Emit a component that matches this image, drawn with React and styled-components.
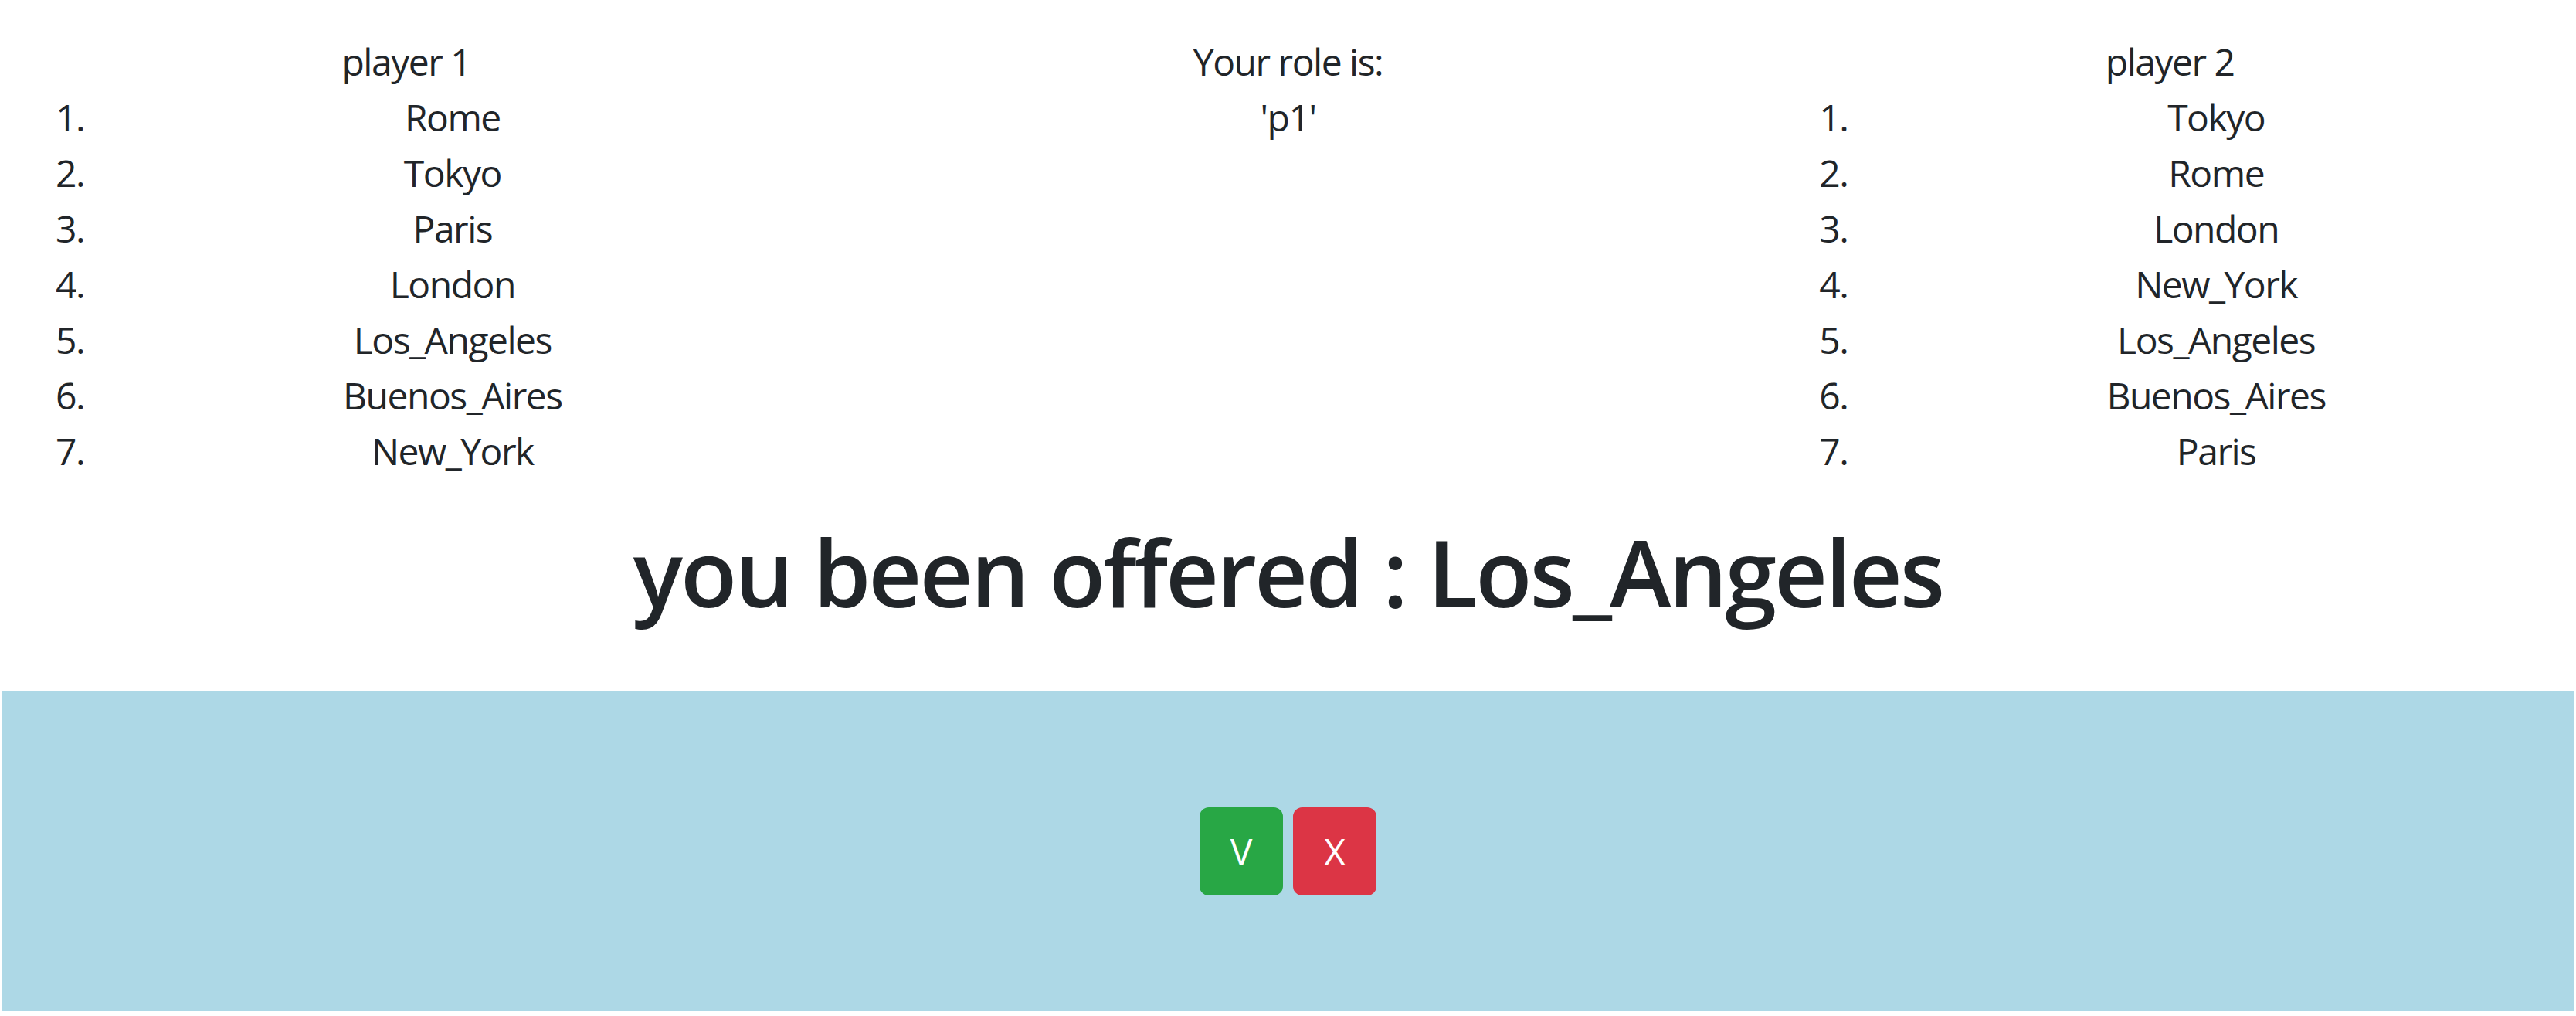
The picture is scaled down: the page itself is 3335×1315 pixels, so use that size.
import React from "react";
import styled, { createGlobalStyle } from "styled-components";

const GlobalStyle = createGlobalStyle`
  html, body {
    margin: 0;
    padding: 0;
    background: #ffffff;
  }
  body {
    font-family: "Open Sans", "Noto Sans", "Liberation Sans", sans-serif;
    font-size: 48px;
    line-height: 72px;
    color: #212529;
  }
  * { box-sizing: border-box; }
`;

const Page = styled.div`
  width: 3335px;
  padding-top: 44px;
`;

const Board = styled.div`
  display: grid;
  grid-template-columns: repeat(3, 1fr);
  column-gap: 90px;
  letter-spacing: -1.5px;
`;

const Column = styled.div`
  text-align: center;
`;

const Heading = styled.div`
  text-align: center;
`;

const Ranking = styled.ol`
  margin: 0 0 48px;
  padding-left: 120px;
  list-style: decimal outside;
`;

const Item = styled.li`
  text-align: center;
`;

const Offer = styled.h1`
  margin: 0 0 24px;
  font-size: 120px;
  line-height: 144px;
  font-weight: 600;
  letter-spacing: -3px;
  text-align: center;
`;

const Panel = styled.div`
  margin: 83px 2px 0;
  height: 414px;
  background: #add8e6;
  display: flex;
  align-items: center;
  justify-content: center;
  gap: 13px;
`;

const Choice = styled.button`
  font-family: inherit;
  font-size: 48px;
  line-height: 72px;
  padding: 18px 36px;
  border: 3px solid ${(p) => p.$color};
  background: ${(p) => p.$color};
  color: #ffffff;
  border-radius: 12px;
  cursor: pointer;
  width: 108px;
  height: 114px;
  display: flex;
  align-items: center;
  justify-content: center;
`;

const p1 = ["Rome", "Tokyo", "Paris", "London", "Los_Angeles", "Buenos_Aires", "New_York"];
const p2 = ["Tokyo", "Rome", "London", "New_York", "Los_Angeles", "Buenos_Aires", "Paris"];

function PlayerList({ title, cities }) {
  return (
    <Column>
      <Heading>{title}</Heading>
      <Ranking>
        {cities.map((c) => (
          <Item key={c}>{c}</Item>
        ))}
      </Ranking>
    </Column>
  );
}

export default function App() {
  return (
    <Page>
      <GlobalStyle />
      <Board>
        <PlayerList title="player 1" cities={p1} />
        <Column>
          <Heading>Your role is:</Heading>
          <Heading>'p1'</Heading>
        </Column>
        <PlayerList title="player 2" cities={p2} />
      </Board>
      <Offer>you been offered : Los_Angeles</Offer>
      <Panel>
        <Choice $color="#28a745">V</Choice>
        <Choice $color="#dc3545">X</Choice>
      </Panel>
    </Page>
  );
}
